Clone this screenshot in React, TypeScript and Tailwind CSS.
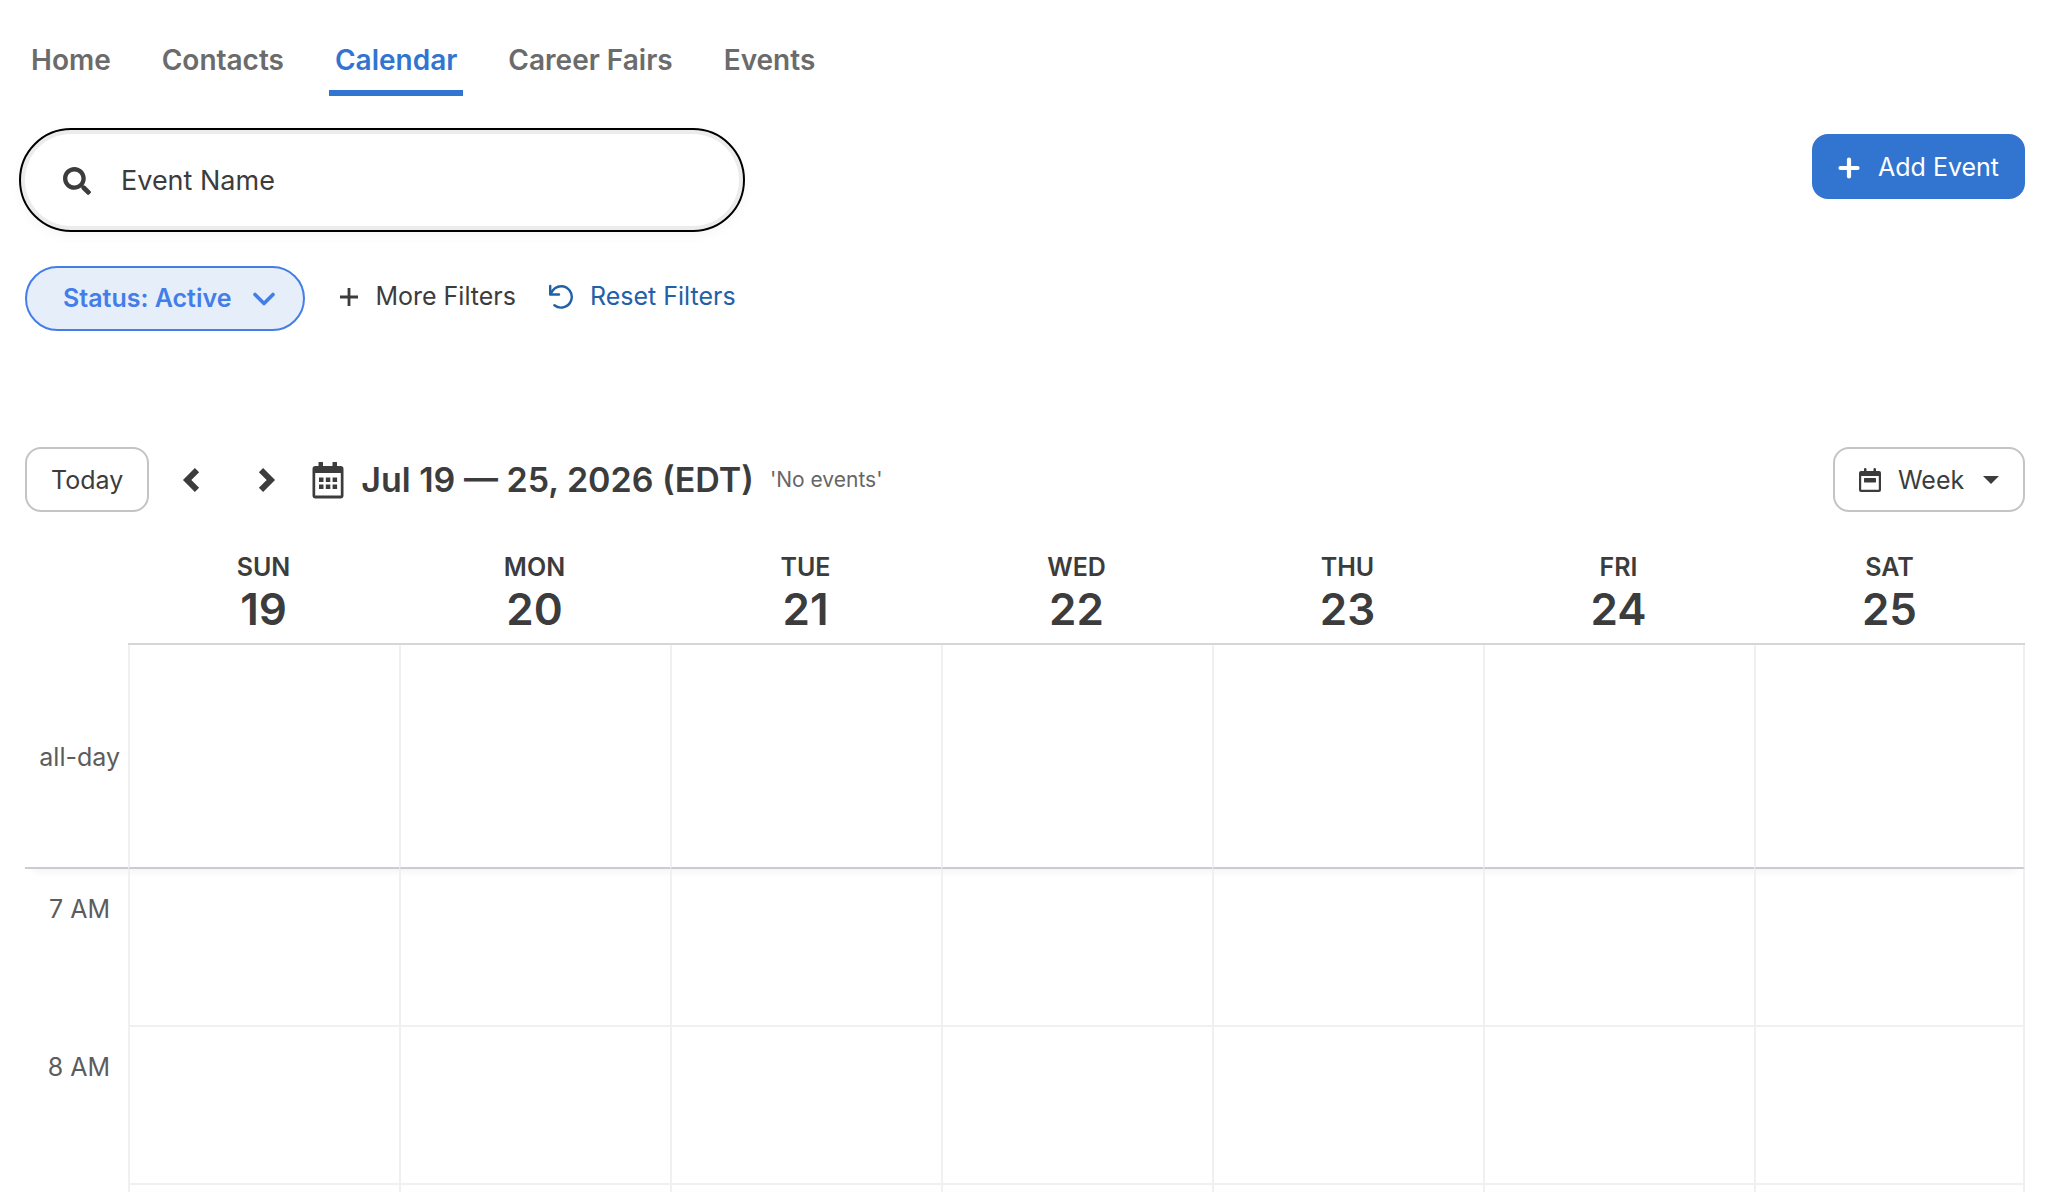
import { FaSearch } from "react-icons/fa";

const tabs = ["Home", "Contacts", "Calendar", "Career Fairs", "Events"];

const days = [
  { name: "SUN", date: 19 },
  { name: "MON", date: 20 },
  { name: "TUE", date: 21 },
  { name: "WED", date: 22 },
  { name: "THU", date: 23 },
  { name: "FRI", date: 24 },
  { name: "SAT", date: 25 },
];

// the trailing blank row runs off the bottom of the window
const hours = ["7 AM", "8 AM", ""];

const MonthIcon = () => (
  <svg width="34" height="38" viewBox="0 0 34 38" fill="currentColor" aria-hidden="true">
    <path
      fillRule="evenodd"
      d="M8 1h3.500q.5 0 .5.500V5h9.500V1.500q0-.5.500-.5h3.500q.5 0 .5.500V5H29.500q3 0 3 3V34.500q0 3-3 3H4.500q-3 0-3-3V8q0-3 3-3H7.500V1.500q0-.5.500-.5zM4.200 12V34.500H29.800V12z"
    />
    <path d="M8 16.500h4.500v4.500H8zM14.800 16.500h4.500v4.500h-4.500zM21.600 16.500h4.500v4.500h-4.500zM8 23.500h4.500V28H8zM14.800 23.500h4.500V28h-4.500zM21.600 23.500h4.500V28h-4.500z" />
  </svg>
);

const WeekIcon = () => (
  <svg width="22" height="24" viewBox="0 0 22 24" fill="currentColor" aria-hidden="true">
    <path
      fillRule="evenodd"
      d="M5 1q0-1 1.200-1T7.500 1V3h7V1q0-1 1.200-1T17 1V3h3q2 0 2 2V22q0 2-2 2H2q-2 0-2-2V5Q0 3 2 3H5zM2.200 8V21.800H19.800V8z"
    />
    <rect x="5" y="10" width="12" height="4.400" rx="0.600" />
  </svg>
);

const ResetIcon = () => (
  <svg width="26" height="26" viewBox="0 0 26 26" fill="none" stroke="currentColor" strokeWidth="2.400" aria-hidden="true">
    <path d="M2.200 2V10.500H11" strokeLinejoin="round" strokeLinecap="round" />
    <path d="M2.600 10C5 4.500 9 2.200 13.200 2.200A10.700 10.700 0 1 1 6.400 21.300" strokeLinecap="round" />
  </svg>
);

const Toolbar = () => (
  <div className="mt-29 flex shrink-0 items-center justify-between">
    <div className="flex items-center">
      <button className="h-[65px] rounded-2xl border-2 border-[#c4c4c4] px-6 pt-0.5">Today</button>
      <button aria-label="Previous week" className="ml-8">
        <svg width="20" height="26" viewBox="0 0 20 26" fill="none" stroke="currentColor" strokeWidth="6">
          <path d="M16 3.200L6.200 13L16 22.800" />
        </svg>
      </button>
      <button aria-label="Next week" className="ml-14">
        <svg width="20" height="26" viewBox="0 0 20 26" fill="none" stroke="currentColor" strokeWidth="6">
          <path d="M4 3.200L13.800 13L4 22.800" />
        </svg>
      </button>
      <div className="ml-[34px] flex items-center gap-4">
        <MonthIcon />
        <h1 className="text-[34px] font-semibold">Jul 19 — 25, 2026 (EDT)</h1>
        <span className="text-[21px] text-[#666666]">'No events'</span>
      </div>
    </div>
    <div className="relative flex items-center">
      <span className="pointer-events-none absolute left-[26px]">
        <WeekIcon />
      </span>
      <select
        aria-label="Calendar view"
        className="h-[65px] appearance-none rounded-2xl border-2 border-[#c4c4c4] bg-white pt-0.5 pr-[58px] pl-[63px]"
      >
        <option>Week</option>
      </select>
      <svg className="pointer-events-none absolute right-[26px]" width="16" height="8" viewBox="0 0 16 8" fill="currentColor" aria-hidden="true">
        <path d="M0 0H16L8 8z" />
      </svg>
    </div>
  </div>
);

const WeekGrid = () => (
  <table className="w-full table-fixed border-separate border-spacing-0">
    <thead>
      <tr>
        <td className="w-[103px]"></td>
        {days.map((day) => (
          <th key={day.name} className="border-b-2 border-[#d6d6d6] pt-[37px] pb-2.5 font-semibold">
            <div className="leading-9">{day.name}</div>
            <div className="text-[44px] leading-12">{day.date}</div>
          </th>
        ))}
      </tr>
    </thead>
    <tbody>
      <tr className="shadow-[0_10px_8px_-8px_rgba(0,0,0,0.06)]">
        <th className="h-56 border-b-2 border-[#c9ccd4] pt-1 pr-2 text-right font-normal text-[#5c5c5c]">all-day</th>
        {days.map((day) => (
          <td key={day.name} className="border-b-2 border-l-2 border-b-[#c9ccd4] border-l-[#f0f0f1] last:border-r-2 last:border-r-[#f0f0f1]"></td>
        ))}
      </tr>
      {hours.map((hour) => (
        <tr key={hour}>
          <th className="h-[158px] pt-[22px] pr-[18px] text-right align-top font-normal text-[#5c5c5c]">{hour}</th>
          {days.map((day) => (
            <td key={day.name} className="border-b-2 border-l-2 border-[#f0f0f1] last:border-r-2"></td>
          ))}
        </tr>
      ))}
    </tbody>
  </table>
);

const App = () => {
  return (
    <main className="flex h-screen flex-col overflow-hidden bg-white pr-[27px] pl-[25px] font-['Inter','Liberation_Sans',sans-serif] text-[25px] text-[#3c3c3c]">
      <nav className="flex shrink-0 gap-[39px] pt-10 text-[28px] leading-10 font-semibold text-[#6b6b6b]">
        {tabs.map((tab) => (
          <a
            key={tab}
            href="#"
            className={
              tab === "Calendar"
                ? "border-b-6 border-[#3175d0] px-1.5 pb-2.5 text-[#3175d0]"
                : "border-b-6 border-transparent px-1.5 pb-2.5"
            }
          >
            {tab}
          </a>
        ))}
      </nav>

      <div className="mt-8 flex shrink-0 items-start justify-between">
        <label className="-ml-1.5 flex h-26 w-[726px] items-center gap-[30px] rounded-full border-2 border-black pt-0.5 pl-10.5 shadow-[inset_0_0_0_4px_#ececec,0_4px_12px_rgba(0,0,0,0.04)]">
          <FaSearch className="size-7 shrink-0" />
          <input
            type="text"
            aria-label="Event Name"
            placeholder="Event Name"
            className="w-full bg-transparent pr-8 text-[27px] outline-none placeholder:text-[#3c3c3c] placeholder:opacity-100"
          />
        </label>
        <button className="mt-1.5 flex h-[65px] items-center gap-[18px] rounded-2xl bg-[#3175d0] px-[26px] pt-0.5 text-white">
          <svg width="22" height="22" viewBox="0 0 22 22" stroke="currentColor" strokeWidth="4.200" strokeLinecap="round" aria-hidden="true">
            <path d="M11 2.500V19.500M2.500 11H19.500" />
          </svg>
          Add Event
        </button>
      </div>

      <div className="mt-8.5 flex shrink-0 items-center">
        <button className="flex h-[65px] items-center gap-[22px] rounded-full border-2 border-[#437de8] bg-[#e6eefa] pr-7 pl-9 font-semibold text-[#437de8]">
          Status: Active
          <svg width="22" height="14" viewBox="0 0 22 14" fill="none" stroke="currentColor" strokeWidth="3.600" strokeLinecap="round" strokeLinejoin="round" aria-hidden="true">
            <path d="M2 2.500L11 11.500L20 2.500" />
          </svg>
        </button>
        <button className="ml-[34px] flex items-center gap-4 pb-1">
          <svg width="20" height="20" viewBox="0 0 20 20" stroke="currentColor" strokeWidth="2.800" aria-hidden="true">
            <path d="M10 1V19M1 10H19" />
          </svg>
          More Filters
        </button>
        <button className="ml-8 flex items-center gap-4 pb-1 text-[#2161a8]">
          <ResetIcon />
          Reset Filters
        </button>
      </div>

      <Toolbar />
      <WeekGrid />
    </main>
  );
};

export default App;
